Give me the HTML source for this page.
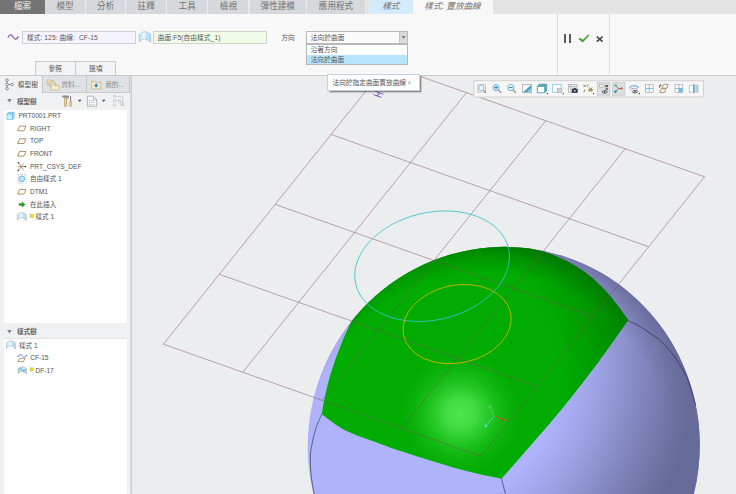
<!DOCTYPE html>
<html><head><meta charset="utf-8">
<style>
*{box-sizing:border-box;margin:0;padding:0}
html,body{width:736px;height:494px;overflow:hidden;background:#ecedef;font-family:"Liberation Sans","Noto Sans CJK TC",sans-serif;color:#444}
.abs,.abs>*{position:absolute}
svg{position:absolute;overflow:visible}
#tabbar{left:0;top:0;width:736px;height:13.7px;background:#e4e4e4}
.tab{top:0;height:13.7px;background:#d6d9db;border-right:1px solid #e9ebec;font-size:8.6px;line-height:13px;text-align:center;color:#727272;white-space:nowrap}
#ribbon{left:0;top:14px;width:736px;height:62px;background:#f8f8f8;border-bottom:1px solid #c8c9ca;z-index:2;box-shadow:inset 0 -1px 0 #fdfdfd}
.t{font-size:6.7px;line-height:10px;white-space:nowrap;color:#555}
.inp{letter-spacing:.08px;height:12.4px;top:17.2px;border:1px solid #cfcfd9;font-size:6.7px;line-height:12px;white-space:nowrap;color:#555;padding-left:3.6px}
#left{left:0;top:75.5px;width:131px;height:419px;background:#f0f1f3}
#view{left:131px;top:75px;width:605px;height:419px;overflow:hidden;background:#ecedef}
.ti{font-size:6.6px;line-height:10px;white-space:nowrap;color:#555;height:10px;margin-top:.4px}
.ptab{top:0;height:17px;font-size:6.7px;line-height:17px;color:#666;white-space:nowrap}
</style></head><body>
<div id="tabbar" class="abs">
 <div class="tab" style="left:0;width:45.2px;background:#747474;color:#ececec;border-right:none">檔案</div>
 <div class="tab" style="left:45.2px;width:40.8px">模型</div>
 <div class="tab" style="left:86px;width:40.3px">分析</div>
 <div class="tab" style="left:126.3px;width:40.7px">註釋</div>
 <div class="tab" style="left:167px;width:41.3px">工具</div>
 <div class="tab" style="left:208.3px;width:41.2px">檢視</div>
 <div class="tab" style="left:249.5px;width:57.5px">彈性建模</div>
 <div class="tab" style="left:307px;width:59px">應用程式</div>
 <div class="tab" style="left:369px;width:43.5px;background:#d3ebfb;font-style:italic;border-right:none">樣式</div>
 <div class="tab" style="left:412.5px;width:80px;background:#f8f8f8;font-style:italic;border-right:none">樣式: 置放曲線</div>
</div>
<div id="ribbon" class="abs">
 <svg style="left:7px;top:19px" width="13" height="8" viewBox="0 0 13 8"><path d="M1 4.6C2.2 1.2 4.2 1 6 4C7.8 7 9.8 6.6 11.4 3.4" fill="none" stroke="#8a55a8" stroke-width="1.3"/></svg>
 <div class="inp" style="left:22.3px;width:113.7px;background:#f5f3ff">樣式: 125: 曲線: &nbsp;CF-15</div>
 <svg style="left:0;top:-14px" width="160" height="50" viewBox="0 0 160 50"><defs><linearGradient id="sfg" x1="0" x2="1" y1="0" y2="0"><stop offset="0" stop-color="#aedffa"/><stop offset=".42" stop-color="#f2fbff"/><stop offset=".62" stop-color="#bce6fb"/><stop offset="1" stop-color="#a8dbf8"/></linearGradient></defs><path d="M139.200 34.600Q145 28.600 150.700 34.600L150.700 42.600Q145 35.800 139.200 41.800Z" fill="url(#sfg)" stroke="#b2b6ba" stroke-width=".6"/></svg>
 <div class="inp" style="left:153.2px;width:114.3px;background:#f0fce8;border-color:#cdd5c9">曲面:F5(自由樣式_1)</div>
 <div class="t" style="left:281.3px;top:19.1px">方向</div>
 <div class="inp" style="left:306.1px;width:101.5px;background:#fbfbfb;border-color:#b9b9b9;height:12.7px">法向於曲面</div>
 <div style="left:399.3px;top:18.2px;width:7.4px;height:10.8px;background:#dadada;border-left:1px solid #c4c4c4"></div>
 <svg style="left:401px;top:22.4px" width="5" height="3" viewBox="0 0 5 3"><path d="M0.600 0.200L4.400 0.200L2.500 2.400Z" fill="#606060"/></svg>
 <div style="left:306.1px;top:29.9px;width:101.5px;height:20.9px;background:#fff;border:1px solid #b4b8bc"></div>
 <div style="left:307.1px;top:40.6px;width:99.5px;height:9.4px;background:#b9e5fc"></div>
 <div class="t" style="left:310.7px;top:31.1px">沿著方向</div>
 <div class="t" style="left:310.7px;top:41.1px">法向於曲面</div>
 <div style="left:35.2px;top:47.2px;width:80.6px;height:13.4px;border:1px solid #c9c9c9;border-bottom:none;background:#f2f3f4"></div>
 <div style="left:75px;top:47.2px;width:1px;height:13.400px;background:#c9c9c9"></div>
 <div class="t" style="left:35.2px;top:49.8px;width:40px;text-align:center">參照</div>
 <div class="t" style="left:75.8px;top:49.8px;width:40px;text-align:center">選項</div>
 <div style="left:557px;top:0;width:1px;height:61px;background:#dcdcde"></div>
 <div style="left:609.2px;top:0;width:1px;height:61px;background:#dcdcde"></div>
 <div style="left:564px;top:20.4px;width:2.4px;height:8.4px;background:#5a5a5a"></div>
 <div style="left:568.5px;top:20.4px;width:2.4px;height:8.4px;background:#5a5a5a"></div>
 <svg style="left:578px;top:20px" width="12" height="9" viewBox="0 0 12 9"><path d="M0.6 5L2 3.8L4.4 5.8L10.2 0.4L11.4 1.4L4.6 8.4Z" fill="#3c9c34"/><path d="M4.6 6.4L10.4 1" stroke="#9ad04a" stroke-width=".7" fill="none"/></svg>
 <svg style="left:596px;top:22.4px" width="8" height="7" viewBox="0 0 8 7"><path d="M0.8 0.6L6.6 5.6M6.6 0.6L0.8 5.6" stroke="#444" stroke-width="1.5" fill="none"/></svg>
</div>
<div id="view" class="abs">
<svg width="605" height="419" viewBox="131 75 605 419" style="position:absolute;left:0;top:0">
 <defs>
  <radialGradient id="sph" gradientUnits="userSpaceOnUse" cx="403.0" cy="360.0" r="295.0"><stop offset="0.542" stop-color="rgb(174,179,250)"/><stop offset="0.588" stop-color="rgb(168,173,242)"/><stop offset="0.634" stop-color="rgb(161,166,233)"/><stop offset="0.680" stop-color="rgb(154,159,223)"/><stop offset="0.725" stop-color="rgb(146,151,212)"/><stop offset="0.771" stop-color="rgb(138,142,201)"/><stop offset="0.817" stop-color="rgb(130,134,190)"/><stop offset="0.863" stop-color="rgb(122,126,179)"/><stop offset="0.908" stop-color="rgb(115,119,169)"/><stop offset="0.954" stop-color="rgb(108,112,160)"/><stop offset="1.000" stop-color="rgb(102,106,152)"/></radialGradient>
  <radialGradient id="grn" gradientUnits="userSpaceOnUse" cx="410.0" cy="380.0" r="280.0"><stop offset="0.536" stop-color="rgb(0,172,0)"/><stop offset="0.582" stop-color="rgb(0,166,0)"/><stop offset="0.629" stop-color="rgb(0,160,0)"/><stop offset="0.675" stop-color="rgb(0,153,0)"/><stop offset="0.721" stop-color="rgb(0,146,0)"/><stop offset="0.768" stop-color="rgb(0,138,0)"/><stop offset="0.814" stop-color="rgb(0,130,0)"/><stop offset="0.861" stop-color="rgb(0,123,0)"/><stop offset="0.907" stop-color="rgb(0,116,0)"/><stop offset="0.954" stop-color="rgb(0,110,0)"/><stop offset="1.000" stop-color="rgb(0,104,0)"/></radialGradient>
  <radialGradient id="hl" cx="460.5" cy="413.5" r="63" gradientUnits="userSpaceOnUse">
   <stop offset="0" stop-color="#50e650" stop-opacity="1"/><stop offset="0.25" stop-color="#48e048" stop-opacity=".9"/><stop offset="0.6" stop-color="#30d030" stop-opacity=".45"/><stop offset="1" stop-color="#10b010" stop-opacity="0"/>
  </radialGradient>
  <radialGradient id="rimL" gradientUnits="userSpaceOnUse" cx="487.75" cy="454.0" r="216"><stop offset="0" stop-color="rgb(102,106,152)" stop-opacity="0"/><stop offset=".84" stop-color="rgb(102,106,152)" stop-opacity="0"/><stop offset=".92" stop-color="rgb(102,106,152)" stop-opacity=".35"/><stop offset="1" stop-color="rgb(102,106,152)" stop-opacity=".85"/></radialGradient>
  <radialGradient id="rimG" gradientUnits="userSpaceOnUse" cx="487.75" cy="454.0" r="216"><stop offset="0" stop-color="rgb(0,104,0)" stop-opacity="0"/><stop offset=".84" stop-color="rgb(0,104,0)" stop-opacity="0"/><stop offset=".92" stop-color="rgb(0,104,0)" stop-opacity=".35"/><stop offset="1" stop-color="rgb(0,104,0)" stop-opacity=".85"/></radialGradient>
  <clipPath id="gc"><path d="M321.7 414.2C322.1 411.8 323.1 405.8 324.3 400.0C325.5 394.2 326.7 387.6 329.1 379.3C331.5 371.0 335.1 359.7 338.9 350.0C342.7 340.3 347.3 329.3 351.8 321.0C356.3 312.7 363.6 303.5 366.0 300.0L340 280L340 230L535 230L535 249.5L542.3 251.1C546.0 252.6 557.1 256.3 564.5 260.0C571.9 263.7 579.4 267.6 586.8 273.4C594.2 279.1 602.1 286.7 609.0 294.5C615.9 302.3 625.2 315.8 628.4 320.1C623.5 326.9 610.2 346.4 599.3 361.0C588.4 375.6 575.0 392.8 562.9 407.7C550.8 422.6 536.6 438.5 526.4 450.3C516.2 462.1 505.6 474.0 501.5 478.7C497.6 477.9 485.8 475.7 477.8 473.8C469.8 471.9 461.5 469.7 453.4 467.4C445.2 465.1 437.0 462.6 428.9 460.1C420.8 457.6 412.6 455.0 404.5 452.3C396.4 449.6 389.8 447.4 380.0 443.7C370.2 440.0 355.3 435.3 345.6 430.4C335.9 425.5 325.7 416.9 321.7 414.2Z"/></clipPath>
  <clipPath id="sc"><ellipse cx="503.75" cy="446.0" rx="199.2" ry="196.0" transform="rotate(-83.1 503.75 446.0)"/></clipPath>
 </defs>
 <rect x="295" y="235" width="420" height="265" fill="url(#sph)" clip-path="url(#sc)"/>
 <g clip-path="url(#sc)">
  <rect x="295" y="235" width="420" height="265" fill="url(#rimL)"/>
  <path d="M321.7 414.2C322.1 411.8 323.1 405.8 324.3 400.0C325.5 394.2 326.7 387.6 329.1 379.3C331.5 371.0 335.1 359.7 338.9 350.0C342.7 340.3 347.3 329.3 351.8 321.0C356.3 312.7 363.6 303.5 366.0 300.0L340 280L340 230L535 230L535 249.5L542.3 251.1C546.0 252.6 557.1 256.3 564.5 260.0C571.9 263.7 579.4 267.6 586.8 273.4C594.2 279.1 602.1 286.7 609.0 294.5C615.9 302.3 625.2 315.8 628.4 320.1C623.5 326.9 610.2 346.4 599.3 361.0C588.4 375.6 575.0 392.8 562.9 407.7C550.8 422.6 536.6 438.5 526.4 450.3C516.2 462.1 505.6 474.0 501.5 478.7C497.6 477.9 485.8 475.7 477.8 473.8C469.8 471.9 461.5 469.7 453.4 467.4C445.2 465.1 437.0 462.6 428.9 460.1C420.8 457.6 412.6 455.0 404.5 452.3C396.4 449.6 389.8 447.4 380.0 443.7C370.2 440.0 355.3 435.3 345.6 430.4C335.9 425.5 325.7 416.9 321.7 414.2Z" fill="url(#grn)"/>
  <g clip-path="url(#gc)"><rect x="295" y="235" width="420" height="265" fill="url(#rimG)"/><circle cx="460.5" cy="413.5" r="63" fill="url(#hl)"/></g>
 </g>
 <g fill="none" stroke="#202030" stroke-width="0.7" stroke-opacity=".8"><path d="M628.4 320.7C630.3 321.7 636.4 324.4 640.0 326.5C643.6 328.6 646.3 330.5 650.0 333.1C653.7 335.7 658.1 338.4 662.1 342.3C666.1 346.2 670.6 351.3 674.3 356.4C678.0 361.4 681.8 367.9 684.4 372.6C687.0 377.3 687.7 379.3 689.6 384.7C691.5 390.1 694.7 401.6 695.7 405.0"/><path d="M501.5 478.7L505.5 494"/><path d="M321.7 414.2C320.8 416.5 317.5 423.6 316.0 428.0C314.5 432.4 313.7 436.6 312.8 440.6C311.9 444.6 311.0 448.6 310.6 452.0C310.2 455.4 310.4 457.5 310.4 460.8C310.4 464.1 310.5 468.3 310.8 472.0C311.1 475.7 311.6 479.3 312.2 483.0C312.8 486.7 313.9 492.2 314.2 494.0"/></g>
 <path d="M387.0 64.6L163.4 344.2M387.0 64.6L704.6 176.8M466.4 92.6L242.8 372.2M331.1 134.5L648.7 246.7M545.8 120.7L322.2 400.3M275.2 204.4L592.8 316.6M625.2 148.8L401.6 428.4M219.3 274.3L536.9 386.5M704.6 176.8L481.0 456.4M163.4 344.2L481.0 456.4" stroke="#7a5058" stroke-opacity="0.56" stroke-width="0.85" fill="none"/>
 <ellipse cx="432.1" cy="266.2" rx="78.5" ry="53.7" transform="rotate(-13.2 432.1 266.2)" fill="none" stroke="#38c4cc" stroke-width="0.8"/>
 <ellipse cx="457.1" cy="324.1" rx="54.7" ry="38.9" transform="rotate(-11.75 457.1 324.1)" fill="none" stroke="#d4b400" stroke-width="0.8"/>
 <g stroke-width="0.8" fill="none"><path d="M494.2 416L490 407" stroke="#56d85a"/><path d="M494.2 416L505.2 420" stroke="#e04030"/><path d="M494.2 416L485.9 425.8" stroke="#40e0e0"/></g>
 <circle cx="490" cy="407" r="1.7" fill="#48d24e"/><circle cx="505.2" cy="420" r="1.2" fill="#f04030"/><circle cx="485.9" cy="425.8" r="1.2" fill="#40f0f0"/>
 <text x="0" y="0" transform="matrix(0.42 -0.53 0.943 0.333 380.6 98.3)" font-size="12.5" fill="#6a3cc0" font-family="Liberation Sans,sans-serif">H</text>
</svg>
</div>
<div id="left" class="abs">
 <div style="left:0;top:0;width:129.8px;height:17px;background:#dfe2e4;border-bottom:1px solid #c9cbcd"></div>
 <div style="left:0;top:0;width:42.2px;height:17.5px;background:#f0f1f3"></div>
 <div style="left:42.2px;top:0;width:1px;height:17px;background:#c4c6c8"></div>
 <div style="left:86.2px;top:0;width:1px;height:17px;background:#c4c6c8"></div>
 <div style="left:129.3px;top:0;width:1px;height:17px;background:#c4c6c8"></div>
 <div class="ptab" style="left:17.8px;color:#555">模型樹</div>
 <div class="ptab" style="left:61.3px;color:#8a8a8a">資料...</div>
 <div class="ptab" style="left:105.2px;color:#8a8a8a">我的...</div>
 <div style="left:129.8px;top:0;width:2.2px;height:419px;background:linear-gradient(90deg,#e4e5e7,#c2c4c6)"></div>
 <div class="ti" style="left:16.9px;top:20.7px;font-weight:bold;color:#646464">模型樹</div>
 <svg style="left:7.4px;top:23.8px" width="5" height="4" viewBox="0 0 5 4"><path d="M0.2 0L4.800 0L2.500 3.600Z" fill="#858585"/></svg>
 <div style="left:4px;top:34px;width:123px;height:213.5px;background:#fefefe"></div>
 <div style="left:4px;top:262.5px;width:123px;height:157px;background:#fefefe;border-top:1px solid #e2e4e8"></div>
 <div class="ti" style="left:16.9px;top:251.2px;font-weight:bold;color:#646464">樣式樹</div>
 <svg style="left:7.4px;top:254.2px" width="5" height="4" viewBox="0 0 5 4"><path d="M0.2 0L4.800 0L2.500 3.600Z" fill="#858585"/></svg>
 <div class="ti" style="left:18.4px;top:35.2px">PRT0001.PRT</div>
 <div class="ti" style="left:29.9px;top:47.8px">RIGHT</div>
 <div class="ti" style="left:29.9px;top:60.5px">TOP</div>
 <div class="ti" style="left:29.9px;top:73.1px">FRONT</div>
 <div class="ti" style="left:29.9px;top:85.8px">PRT_CSYS_DEF</div>
 <div class="ti" style="left:29.9px;top:98.4px">自由樣式 1</div>
 <div class="ti" style="left:29.9px;top:111.1px">DTM1</div>
 <div class="ti" style="left:29.9px;top:123.7px">在此插入</div>
 <div class="ti" style="left:35.4px;top:136.4px">樣式 1</div>
 <div class="ti" style="left:18.9px;top:264.8px">樣式 1</div>
 <div class="ti" style="left:30.2px;top:277.3px">CF-15</div>
 <div class="ti" style="left:35.4px;top:289.9px">DF-17</div>
</div>
<div class="abs" style="z-index:3;left:326.9px;top:74.3px;width:92.8px;height:16.4px;background:#fff;border:1px solid #c3d3e3;box-shadow:1.5px 1.5px 1.5px rgba(0,0,0,.42)">
 <div class="t" style="left:4.6px;top:3.2px">法向於指定曲面置放曲線。</div>
</div>
<svg id="icons" width="736" height="494" viewBox="0 0 736 494" style="position:absolute;left:0;top:0;pointer-events:none">
 <defs>
  <g id="pl"><path d="M1.9 0.5L8.3 0.5L6.3 5.2L0 5.2Z" fill="none" stroke="#a08252" stroke-width=".85"/></g>
  <g id="sty"><path d="M0.300 2.900Q4.800 -1.900 9.300 2.900L9.300 8.800Q4.800 2.600 0.300 8.200Z" fill="url(#styg)" stroke="#b0b4b8" stroke-width=".6"/></g><linearGradient id="styg" x1="0" x2="1" y1="0" y2="0"><stop offset="0" stop-color="#b0e0fa"/><stop offset=".42" stop-color="#f0faff"/><stop offset=".62" stop-color="#bce6fb"/><stop offset="1" stop-color="#aadcf8"/></linearGradient>
  <g id="dd"><path d="M0 0L3.8 0L1.9 2.1Z" fill="#555"/></g>
 </defs>
 <!-- panel tabs -->
 <g fill="#f6f6f6" stroke="#6a6a6a" stroke-width=".7"><circle cx="7.1" cy="80.2" r="1.3"/><circle cx="7.1" cy="84.5" r="1.3"/><circle cx="7.1" cy="88.8" r="1.3"/><circle cx="12.1" cy="84.5" r="1.3"/><path d="M7.1 81.500V83.200M7.1 85.800V87.500M8.400 84.500H10.800" fill="none"/></g>
 <g fill="#f0e2bc" stroke="#b8a888" stroke-width=".6"><path d="M47.1 79.8h2.4l.8.8h3.2v3.9h-6.4z"/><path d="M49.3 82h2.4l.8.8h3.2v3.9h-6.4z"/><path d="M51 84.6h2.8l.9.9h4.4v4.6H51z" fill="#f6ecd0"/></g>
 <g><path d="M91.6 81.2h3l1 1h5.1v6.8h-9.1z" fill="#f4e8c4" stroke="#b8a888" stroke-width=".6"/><path d="M96.2 83.3l1.9 2.2l-1.9 2.2l-1.9-2.2z" fill="#3a8ac8"/></g>
 <!-- tree toolbar -->
 <g><rect x="64.4" y="97.6" width="2.5" height="8.8" fill="#dcc48c" stroke="#a89060" stroke-width=".4"/><path d="M62.4 95.6h5.4c.8 0 1.1.6 1.1 1.4v1.4h-1.6v-.8h-4.9z" fill="#8a8a8a"/><rect x="69.5" y="101.4" width="2.2" height="5.2" rx=".8" fill="#dcc48c" stroke="#a89060" stroke-width=".4"/><rect x="70.2" y="96" width=".9" height="5.4" fill="#777"/></g>
 <use href="#dd" x="77.8" y="99.8"/><use href="#dd" x="101.7" y="99.8"/>
 <g><path d="M87.4 96.2h6l3.2 3.2v6.8h-9.2z" fill="#fdfdfd" stroke="#9a9a9a" stroke-width=".7"/><path d="M93.4 96.2v3.2h3.2" fill="#e4e4e4" stroke="#9a9a9a" stroke-width=".6"/><path d="M89 100.4h1M89 102.4h1M89 104.4h1" stroke="#666" stroke-width=".7"/><path d="M90.8 100.4h4M90.8 102.4h4M90.8 104.4h4" stroke="#9cc4dc" stroke-width=".7"/></g>
 <g fill="none" stroke="#c6c8ca" stroke-width=".7"><rect x="113.6" y="95.6" width="2" height="2"/><rect x="113.6" y="99.8" width="2" height="2"/><rect x="113.6" y="104" width="2" height="2"/><rect x="118.6" y="99.8" width="2" height="2"/><path d="M116 96.6h6.8v9h-1M115.6 100.8h3"/><circle cx="121.6" cy="103.6" r="1.6" stroke="#b0b2b4"/><path d="M122.8 104.8l1.8 1.6" stroke="#b0b2b4"/></g>
 <!-- model tree -->
 <g><path d="M6.9 114.2l1.6-1.9h5.6v5.4l-1.6 1.9H6.9z" fill="#a6def6" stroke="#56b0d6" stroke-width=".6"/><path d="M6.9 114.2h5.6v5.4M12.5 114.2l1.6-1.9" fill="none" stroke="#56b0d6" stroke-width=".6"/><rect x="7.4" y="114.7" width="4.6" height="4.4" fill="#d0f0fc"/></g>
 <use href="#pl" x="17.7" y="125.6"/><use href="#pl" x="17.7" y="138.3"/><use href="#pl" x="17.7" y="150.9"/><use href="#pl" x="17.7" y="188.9"/>
 <g stroke="#a08252" stroke-width=".8" fill="none"><path d="M18.6 163l5 7.4M18.4 170.4l5.4-7M17.8 166.6h7.6"/></g><g fill="#333"><rect x="17.8" y="162.2" width="1.3" height="1.3"/><rect x="17.6" y="169.8" width="1.3" height="1.3"/><rect x="24.8" y="166" width="1.3" height="1.3"/></g>
 <g><rect x="18" y="174.6" width="7.8" height="8.6" fill="none" stroke="#9aa0a8" stroke-width=".6" stroke-dasharray="1 1"/><circle cx="21.8" cy="178.8" r="2.9" fill="#bfe6fa" stroke="#5aa8d4" stroke-width=".8"/></g>
 <path d="M19 203.6h3v-1.9l3.2 2.8l-3.2 2.8v-1.9h-3z" fill="#22a022" stroke="#147014" stroke-width=".3"/>
 <use href="#sty" x="17" y="212"/>
 <rect x="30.3" y="214.4" width="3" height="3" fill="#f4f000" stroke="#b0a840" stroke-width=".5"/>
 <!-- style tree -->
 <use href="#sty" x="6.100" y="340.200"/>
 <g fill="none"><path d="M19.6 358.4h5.4l-1.6 3.2h-5.4z" stroke="#a08252" stroke-width=".8"/><path d="M18 356.6c1.4-2.4 3-2.2 4.4-.6s2.800 1.600 4.200-.8" stroke="#8a55b8" stroke-width=".9"/><circle cx="18.200" cy="356.400" r=".7" fill="#38a0d0"/><circle cx="26.400" cy="355.400" r=".7" fill="#38a0d0"/></g>
 <g><path d="M18.300 368.500Q22.300 365.300 26.300 368.500L26.300 373.700Q22.300 369.500 18.300 373.300Z" fill="#c8eafc" stroke="#9aa0a6" stroke-width=".6"/><path d="M18.500 370.200c1.400-1.800 2.600-1.600 3.800-.3s2.600 1.300 3.800-.7" fill="none" stroke="#3a8ad0" stroke-width=".9"/></g>
 <rect x="30.2" y="367.900" width="3" height="3" fill="#f4f000" stroke="#b0a840" stroke-width=".5"/>
</svg>
<svg id="tb" width="736" height="494" viewBox="0 0 736 494" style="position:absolute;left:0;top:0;pointer-events:none">
 <rect x="473.8" y="80.700" width="229.700" height="16.300" fill="#f6f6f6" stroke="#d2d2d2" stroke-width="1"/>
 <!-- 1 refit -->
 <rect x="477.900" y="84.700" width="7.600" height="7.400" fill="#fcfcfc" stroke="#a8a8a8" stroke-width=".7"/><circle cx="481.400" cy="88" r="2.600" fill="#eef8ff" stroke="#78b8e0" stroke-width=".9"/><path d="M483.400 90l2.700 2.900" stroke="#8a8a8a" stroke-width="1.100"/>
 <!-- 2 zoom in -->
 <circle cx="496.100" cy="87.600" r="3.100" fill="#eef8ff" stroke="#58a8d8" stroke-width=".9"/><path d="M494.300 87.600h3.600M496.100 85.800v3.600" stroke="#2a78a8" stroke-width="1"/><path d="M498.400 90l2.800 2.900" stroke="#8a8a8a" stroke-width="1.200"/>
 <!-- 3 zoom out -->
 <circle cx="510.800" cy="87.600" r="3.100" fill="#eef8ff" stroke="#58a8d8" stroke-width=".9"/><path d="M509 87.600h3.600" stroke="#2a78a8" stroke-width="1"/><path d="M513.100 90l2.800 2.900" stroke="#8a8a8a" stroke-width="1.200"/>
 <!-- 4 repaint -->
 <rect x="522.700" y="84.500" width="8.800" height="8.200" fill="#f4fafc" stroke="#9a9ea2" stroke-width=".7"/><path d="M531.100 84.900v7.400h-8z" fill="#4a9aba"/><path d="M531.100 88v4.300h-4.600z" fill="#9ccce0"/>
 <!-- 5 cube -->
 <path d="M537.300 86.400l2-2.200h7.300v6.400l-2 2.200h-7.300z" fill="#58a8c4" stroke="#3a88a8" stroke-width=".7"/><rect x="537.800" y="86.900" width="6.300" height="5.400" fill="#fcfeff"/><rect x="546.800" y="93" width="1.100" height="1.100" fill="#333"/>
 <!-- 6 -->
 <rect x="552.600" y="84.400" width="8.600" height="7.800" fill="#fcfeff" stroke="#8cc8e8" stroke-width=".9"/><rect x="557.400" y="88.400" width="4.600" height="4.400" fill="#d0d2d4" stroke="#a4a6a8" stroke-width=".5"/><path d="M562.400 94.200l1.600-1.600v1.600z" fill="#333"/>
 <!-- 7 camera -->
 <rect x="568.300" y="84.400" width="8.800" height="8" fill="#eceeef" stroke="#a0a2a4" stroke-width=".6"/><path d="M568.300 86.600h8.800M570.800 84.400v8" stroke="#a0a2a4" stroke-width=".6"/><rect x="571.800" y="88.800" width="5.800" height="4" fill="#2c3444"/><rect x="573.600" y="87.900" width="2.200" height="1.200" fill="#2c3444"/><circle cx="574.700" cy="90.800" r="1" fill="#c8d0e0"/>
 <!-- 8 datum -->
 <g stroke="#94762e" stroke-width=".9" fill="none"><path d="M583.400 84.600l2.400 2.400M585.800 84.600l-2.400 2.400M588.200 84.200l-.8 2.400M585 89.600l-1.200 2.800M589 87.400l3 4.600M592.200 87.600l-3.400 4.400M588 89.800h5"/></g><rect x="593" y="93" width="1.100" height="1.100" fill="#333"/>
 <!-- 9 pressed -->
 <rect x="597.300" y="82.400" width="12.600" height="12.800" fill="#dcdee0" stroke="#c0c4c8" stroke-width=".7"/><rect x="599.300" y="84.800" width="5.400" height="2.300" fill="#faf2d4" stroke="#9a9a9a" stroke-width=".5"/><path d="M604.700 86h1.800v3.400" fill="none" stroke="#555" stroke-width=".6"/><rect x="605.600" y="85" width="2.400" height="1.800" fill="#555"/><rect x="605.600" y="88.400" width="2.400" height="1.200" fill="#444"/><ellipse cx="604.800" cy="91.900" rx="2.600" ry="1.300" fill="#f0f0f0" stroke="#333" stroke-width=".7"/><circle cx="604.800" cy="91.900" r=".8" fill="#222"/>
 <!-- 10 pressed -->
 <rect x="612.300" y="82.400" width="12.600" height="12.800" fill="#dcdee0" stroke="#c0c4c8" stroke-width=".7"/><path d="M618.600 88.500L615.600 85.400M618.600 88.500L621.700 88.500M618.600 88.500L615.400 91.600" stroke="#555" stroke-width=".8"/><circle cx="615.600" cy="85.400" r="1.200" fill="#48b868"/><circle cx="621.700" cy="88.500" r="1.300" fill="#e86858"/><circle cx="615.400" cy="91.600" r="1.300" fill="#2898b8"/>
 <!-- 11 -->
 <path d="M629.600 88.400c.6-3.400 7.600-3.800 8.600-.4" fill="none" stroke="#78b8e8" stroke-width="1.300"/><path d="M630.400 89.800c1.800-2 5.200-2 7.200 0" fill="none" stroke="#a878c8" stroke-width=".8"/><ellipse cx="635" cy="91.700" rx="2.800" ry="1.300" fill="#f0f0f0" stroke="#333" stroke-width=".7"/><circle cx="635" cy="91.700" r=".8" fill="#222"/><path d="M638.400 94.200l1.600-1.600v1.600z" fill="#333"/>
 <!-- 12 grid -->
 <rect x="645.400" y="84.600" width="7.800" height="7.800" fill="#fafcfd" stroke="#a8aaac" stroke-width=".7"/><path d="M649.300 84.600v7.800M645.400 88.500h7.800" stroke="#68b8e0" stroke-width=".8"/>
 <!-- 13 planes -->
 <g fill="none" stroke="#a08252" stroke-width=".8"><path d="M663.400 84.400h4.800l-1.200 3.800h-4.800z"/><path d="M661 88.800h4.800l-1.200 3.800h-4.800z"/></g><path d="M659.400 88v-2.400h2.400M659.400 85.600l1.400-1.200" fill="none" stroke="#444" stroke-width=".7"/>
 <!-- 14 -->
 <rect x="675.100" y="84.600" width="7.600" height="7.800" fill="#fafcfd" stroke="#a8aaac" stroke-width=".7"/><rect x="678.900" y="88.500" width="3.800" height="3.900" fill="#78bce4"/><path d="M678.900 84.600v7.800M675.100 88.500h7.600" stroke="#68a8d0" stroke-width=".7"/>
 <!-- 15 -->
 <path d="M689.300 86c1.600-1 3-1 4.400-.4v6.800c-1.400-.6-2.800-.6-4.400.4z" fill="#fafcfd" stroke="#a0a4a8" stroke-width=".6"/><path d="M693.700 85.600c1.400-.8 2.800-.8 4.300 0v6.800c-1.500-.8-2.900-.8-4.300 0z" fill="#a8d8f4" stroke="#78b4dc" stroke-width=".6"/><path d="M693.700 84.200v9.200" stroke="#a08252" stroke-width=".9"/>
</svg>

</body></html>
